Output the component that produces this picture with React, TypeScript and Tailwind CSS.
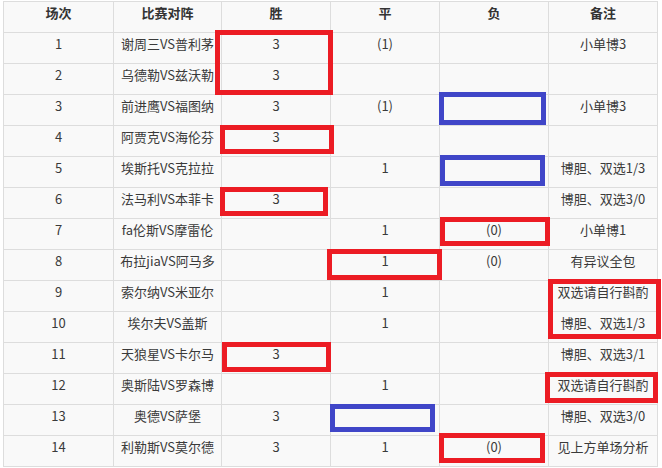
import React from 'react';

type Row = [string, string, string, string, string, string];

const header = ['场次', '比赛对阵', '胜', '平', '负', '备注'];

const rows: Row[] = [
  ['1', '谢周三VS普利茅', '3', '(1)', '', '小单博3'],
  ['2', '乌德勒VS兹沃勒', '3', '', '', ''],
  ['3', '前进鹰VS福图纳', '3', '(1)', '', '小单博3'],
  ['4', '阿贾克VS海伦芬', '3', '', '', ''],
  ['5', '埃斯托VS克拉拉', '', '1', '', '博胆、双选1/3'],
  ['6', '法马利VS本菲卡', '3', '', '', '博胆、双选3/0'],
  ['7', 'fa伦斯VS摩雷伦', '', '1', '(0)', '小单博1'],
  ['8', '布拉jiaVS阿马多', '', '1', '(0)', '有异议全包'],
  ['9', '索尔纳VS米亚尔', '', '1', '', '双选请自行斟酌'],
  ['10', '埃尔夫VS盖斯', '', '1', '', '博胆、双选1/3'],
  ['11', '天狼星VS卡尔马', '3', '', '', '博胆、双选3/1'],
  ['12', '奥斯陆VS罗森博', '', '1', '', '双选请自行斟酌'],
  ['13', '奥德VS萨堡', '3', '', '', '博胆、双选3/0'],
  ['14', '利勒斯VS莫尔德', '3', '1', '(0)', '见上方单场分析'],
];

// annotation boxes drawn over the table: [left, top, right, bottom, colour]
const marks: [number, number, number, number, 'red' | 'blue'][] = [
  [215, 30, 333, 95, 'red'],
  [439, 92, 546, 125, 'blue'],
  [220, 125, 334, 154, 'red'],
  [440, 155, 545, 186, 'blue'],
  [220, 187, 328, 216, 'red'],
  [440, 217, 550, 246, 'red'],
  [327, 249, 442, 280, 'red'],
  [548, 279, 661, 339, 'red'],
  [222, 342, 331, 372, 'red'],
  [545, 372, 658, 403, 'red'],
  [330, 404, 435, 432, 'blue'],
  [439, 433, 545, 463, 'red'],
];

const colW = ['w-[110px]', 'w-[108px]', 'w-[109px]', 'w-[109px]', 'w-[109px]', 'w-[109px]'];

function Cell({ text, i, bold }: { text: string; i: number; bold?: boolean }) {
  return (
    <div
      className={`${colW[i]} h-[31px] shrink-0 border-r border-b border-[#dddddd] bg-[#f9f9f9] pt-[2px] text-center text-[13px] leading-[18px] ${
        bold ? 'font-bold text-[#333333]' : 'text-[#3a3a3a]'
      }`}
    >
      {text}
    </div>
  );
}

export default function App() {
  return (
    <div
      className="relative h-[468px] w-[662px] overflow-hidden bg-white"
      style={{ fontFamily: '"Noto Sans CJK SC", "Noto Sans", sans-serif' }}
    >
      <div className="ml-[3px] mt-[1px] flex w-max flex-col border-l border-t border-[#dddddd]">
        <div className="flex">
          {header.map((h, i) => (
            <Cell key={i} text={h} i={i} bold />
          ))}
        </div>
        {rows.map((r) => (
          <div key={r[0]} className="flex">
            {r.map((t, i) => (
              <Cell key={i} text={t} i={i} />
            ))}
          </div>
        ))}
      </div>

      {marks.map(([l, t, r, b, c], k) => (
        <div
          key={k}
          className={`absolute border-[5px] ${c === 'red' ? 'border-[#ec1c24]' : 'border-[#4046c8]'}`}
          style={{ left: l, top: t, width: r - l, height: b - t }}
        />
      ))}
    </div>
  );
}
